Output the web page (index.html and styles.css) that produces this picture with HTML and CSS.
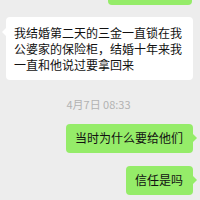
FILE: index.html
```html
<!DOCTYPE html>
<html lang="zh">
<head>
<meta charset="utf-8">
<link rel="stylesheet" href="styles.css">
</head>
<body>
<div class="chat">
  <div class="row right first"><div class="bubble green stub"></div></div>
  <div class="row left"><div class="bubble white">我结婚第二天的三金一直锁在我公婆家的保险柜，结婚十年来我一直和他说过要拿回来</div></div>
  <div class="time">4月7日 08:33</div>
  <div class="row right"><div class="bubble green">当时为什么要给他们</div></div>
  <div class="row right"><div class="bubble green">信任是吗</div></div>
</div>
</body>
</html>
```
FILE: styles.css
```css
html, body {
  margin: 0;
  padding: 0;
  background: #ededed;
}
body {
  width: 200px;
  height: 200px;
  overflow: hidden;
  font-family: "Noto Sans CJK SC", "Noto Sans", sans-serif;
}
.chat {
  display: flex;
  flex-direction: column;
}
.row {
  display: flex;
}
.row.left {
  justify-content: flex-start;
  padding-left: 6px;
  padding-right: 7px;
  margin-top: 12px;
}
.row.right {
  justify-content: flex-end;
  padding-right: 7px;
  margin-top: 13px;
}
.row.first {
  margin-top: 0;
  padding-right: 8px;
}
.bubble {
  position: relative;
  font-size: 12px;
  line-height: 16px;
  color: #111;
  border-radius: 4px;
}
.bubble.white {
  background: #ffffff;
  padding: 8px 10px 7px 8px;
}
.bubble.white::before {
  content: "";
  position: absolute;
  left: -4px;
  top: 11px;
  border-top: 4px solid transparent;
  border-bottom: 4px solid transparent;
  border-right: 4px solid #ffffff;
}
.bubble.green {
  background: #95ec69;
  padding: 6px 10px 7px 9px;
}
.bubble.green::after {
  content: "";
  position: absolute;
  right: -4px;
  top: 10px;
  border-top: 4px solid transparent;
  border-bottom: 4px solid transparent;
  border-left: 4px solid #95ec69;
}
.bubble.stub {
  width: 84px;
  height: 5px;
  padding: 0;
  border-radius: 0 0 4px 4px;
}
.bubble.stub::after {
  display: none;
}
.time {
  margin-top: 17px;
  margin-bottom: 0;
  text-align: center;
  padding-right: 3px;
  font-size: 11px;
  line-height: 14px;
  color: #b2b2b2;
}
.time + .row.right {
  margin-top: 13px;
}
```
